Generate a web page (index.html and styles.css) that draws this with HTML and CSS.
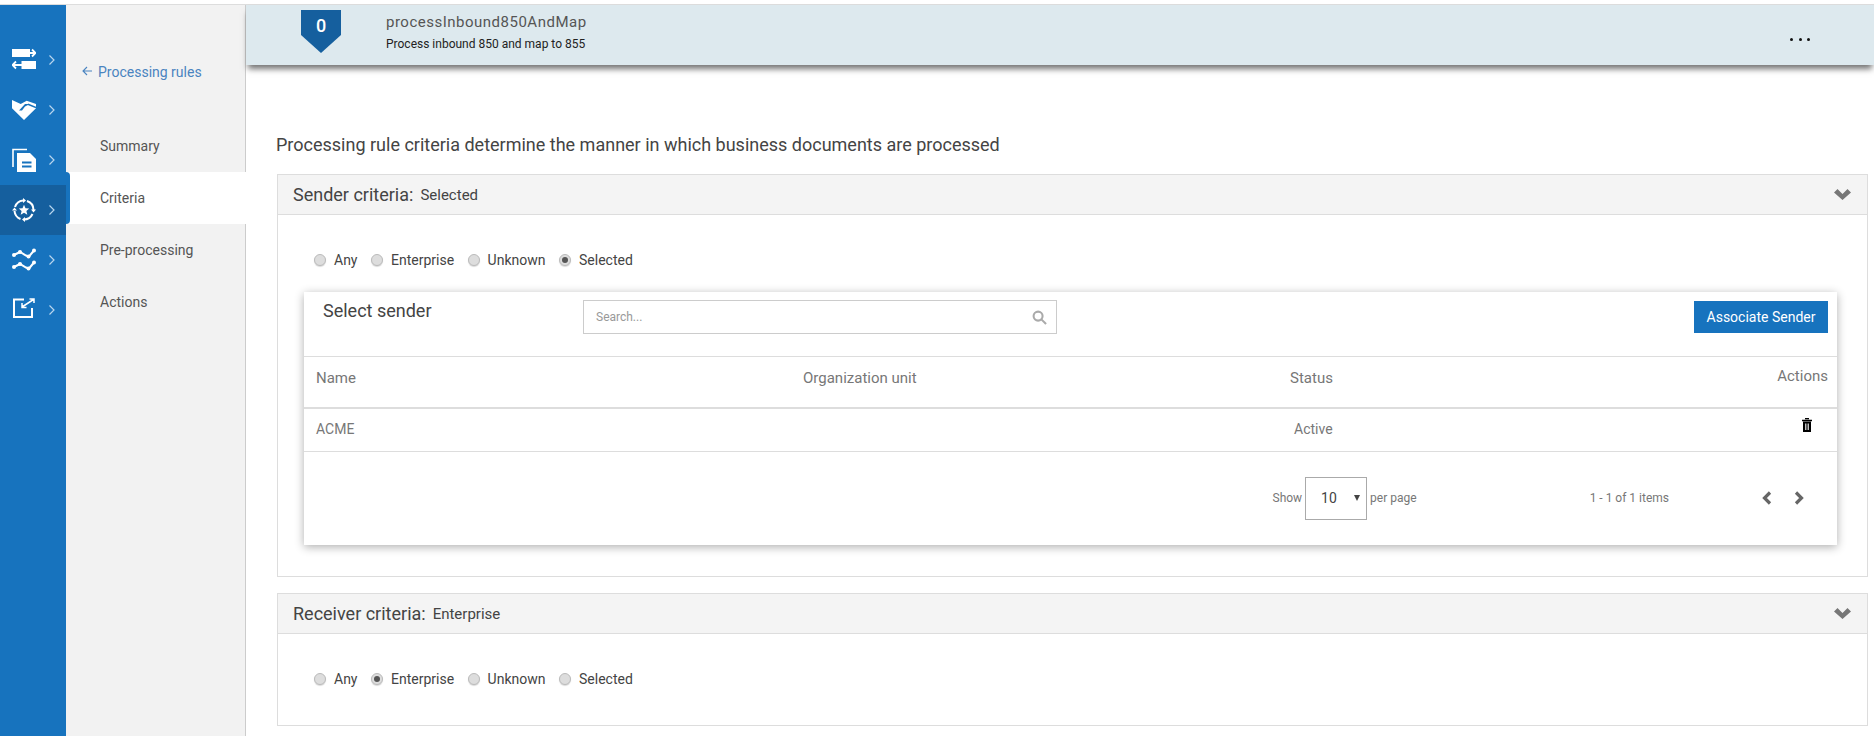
FILE: index.html
```html
<!DOCTYPE html>
<html lang="en">
<head>
  <meta charset="UTF-8">
  <title>Processing rule criteria</title>
  <link rel="stylesheet" href="styles.css">
</head>
<body>
  <div id="app">
    <!-- icon rail -->
    <nav id="rail">
      <a class="rail-item">
        <svg class="rail-icon" viewBox="0 0 24 24">
          <rect x="0" y="1" width="18" height="8" fill="#fff"/>
          <path d="M18 5h5M20 1.500l3.500 3.500-3.500 3.500" fill="none" stroke="#fff" stroke-width="1.800"/>
          <rect x="9.500" y="13" width="14.500" height="8" fill="#fff"/>
          <path d="M10 17H1M4 13.500.500 17 4 20.500" fill="none" stroke="#fff" stroke-width="1.800"/>
        </svg>
        <svg class="rail-arrow" viewBox="0 0 8 12"><path d="M1.500 1.500 6 6l-4.500 4.500" /></svg>
      </a>
      <a class="rail-item">
        <svg class="rail-icon" viewBox="0 0 24 24">
          <path d="M0 2l8.700 4 6-3.300L24 6v4.300L12 22 0 10.300z" fill="#fff"/>
          <path d="M7 12.500l6-6.500h5l-5 2.500-3 4z" fill="#1773be"/>
          <path d="M16 6.300L24 9.500" fill="none" stroke="#1773be" stroke-width="1.500"/>
        </svg>
        <svg class="rail-arrow" viewBox="0 0 8 12"><path d="M1.500 1.500 6 6l-4.500 4.500" /></svg>
      </a>
      <a class="rail-item">
        <svg class="rail-icon" viewBox="0 0 24 24">
          <path d="M1 19V1.500h14" fill="none" stroke="#fff" stroke-width="1.600"/>
          <path d="M5 5h13l6 6v13H5z" fill="#fff"/>
          <path d="M10 14.500h9.500M10 18.500h9.500" stroke="#1773be" stroke-width="2"/>
        </svg>
        <svg class="rail-arrow" viewBox="0 0 8 12"><path d="M1.500 1.500 6 6l-4.500 4.500" /></svg>
      </a>
      <a class="rail-item active">
        <svg class="rail-icon" viewBox="0 0 24 24">
          <path d="M3 9a9.500 9.500 0 0 1 8-6.500M15 3a9.500 9.500 0 0 1 6.500 9M20.500 16A9.500 9.500 0 0 1 12 21.500M8.500 21A9.500 9.500 0 0 1 2.500 13" fill="none" stroke="#fff" stroke-width="2"/>
          <path d="M11 0v5l3-2.500zM24 11.500h-5l2.500 3zM13 24v-5l-3 2.500zM0 12.500h5l-2.500-3z" fill="#fff"/>
          <path d="M12 6.800l1.500 3.500 3.700.3-2.800 2.400.9 3.700-3.300-2-3.300 2 .9-3.700-2.800-2.400 3.700-.3z" fill="#fff"/>
        </svg>
        <svg class="rail-arrow" viewBox="0 0 8 12"><path d="M1.500 1.500 6 6l-4.500 4.500" /></svg>
      </a>
      <a class="rail-item">
        <svg class="rail-icon" viewBox="0 0 24 24">
          <path d="M2 7l6-3 6 3.500 3 1 5-6M2 19l6-3 6 3.500 3 1 5-6" fill="none" stroke="#fff" stroke-width="2"/>
          <g fill="#fff">
            <circle cx="2" cy="7" r="2"/><circle cx="8" cy="4" r="2"/><circle cx="16.500" cy="8.500" r="2"/><circle cx="22" cy="2.500" r="2"/>
            <circle cx="2" cy="19" r="2"/><circle cx="8" cy="16" r="2"/><circle cx="16.500" cy="20.500" r="2"/><circle cx="22" cy="14.500" r="2"/>
          </g>
        </svg>
        <svg class="rail-arrow" viewBox="0 0 8 12"><path d="M1.500 1.500 6 6l-4.500 4.500" /></svg>
      </a>
      <a class="rail-item">
        <svg class="rail-icon" viewBox="0 0 24 24">
          <path d="M12 1.500H2V19h18V10" fill="none" stroke="#fff" stroke-width="2"/>
          <path d="M10 9 21.500 1.500M10 5v4.500h4.500M17.500 1H22v4" fill="none" stroke="#fff" stroke-width="1.500"/>
        </svg>
        <svg class="rail-arrow" viewBox="0 0 8 12"><path d="M1.500 1.500 6 6l-4.500 4.500" /></svg>
      </a>
    </nav>

    <!-- section nav -->
    <aside id="section-nav">
      <a class="back-link">
        <svg class="back-arrow" viewBox="0 0 10 10"><path d="M10 5H1M5 1 1 5l4 4"/></svg>
        Processing rules
      </a>
      <ul class="section-list">
        <li>Summary</li>
        <li class="active">Criteria</li>
        <li>Pre-processing</li>
        <li>Actions</li>
      </ul>
    </aside>

    <main id="main">
      <header class="rule-band">
        <div class="rule-badge">0</div>
        <div class="rule-info">
          <div class="rule-title">processInbound850AndMap</div>
          <div class="rule-sub">Process inbound 850 and map to 855</div>
        </div>
        <div class="rule-menu"><i></i><i></i><i></i></div>
      </header>

      <p class="intro">Processing rule criteria determine the manner in which business documents are processed</p>

      <section class="panel">
        <div class="panel-head">
          <span class="panel-title">Sender criteria:</span>
          <span class="panel-value">Selected</span>
          <svg class="panel-toggle" viewBox="0 0 17 11"><path d="M0 3.500 3.500 0l5 5 5-5L17 3.500 8.500 11z"/></svg>
        </div>
        <div class="panel-body">
          <div class="radios">
            <label class="radio"><span class="dot"></span>Any</label>
            <label class="radio"><span class="dot"></span>Enterprise</label>
            <label class="radio"><span class="dot"></span>Unknown</label>
            <label class="radio"><span class="dot on"></span>Selected</label>
          </div>

          <div class="card">
            <div class="card-head">
              <div class="card-title">Select sender</div>
              <div class="search">
                <span class="search-text">Search...</span>
                <svg class="search-icon" viewBox="0 0 16 16"><circle cx="6.500" cy="6.500" r="4.800"/><path d="M10 10l5 5"/></svg>
              </div>
              <button class="btn-primary" type="button">Associate Sender</button>
            </div>

            <table class="grid">
              <thead>
                <tr>
                  <th class="col-name">Name</th>
                  <th class="col-org">Organization unit</th>
                  <th class="col-status">Status</th>
                  <th class="col-actions">Actions</th>
                </tr>
              </thead>
              <tbody>
                <tr>
                  <td>ACME</td>
                  <td></td>
                  <td class="status-cell">Active</td>
                  <td class="trash-cell">
                    <svg class="trash" viewBox="0 0 10 14">
                      <path d="M3 .5h4M0 2.500h10" stroke="#000" stroke-width="1.400" fill="none"/>
                      <path d="M1 3.500h8V14H1z" fill="#000"/>
                      <path d="M3.800 5.500v6.500M6.200 5.500v6.500" stroke="#fff" stroke-width="1.100"/>
                    </svg>
                  </td>
                </tr>
              </tbody>
            </table>

            <div class="pager">
              <div class="page-size">
                <span>Show</span>
                <div class="page-select"><span>10</span><b class="caret"></b></div>
                <span>per page</span>
              </div>
              <div class="page-count">1 - 1 of 1 items</div>
              <div class="page-arrows">
                <svg viewBox="0 0 10 14"><path d="M8 1.500 2.500 7 8 12.500"/></svg>
                <svg viewBox="0 0 10 14"><path d="M2 1.500 7.500 7 2 12.500"/></svg>
              </div>
            </div>
          </div>
        </div>
      </section>

      <section class="panel">
        <div class="panel-head">
          <span class="panel-title">Receiver criteria:</span>
          <span class="panel-value">Enterprise</span>
          <svg class="panel-toggle" viewBox="0 0 17 11"><path d="M0 3.500 3.500 0l5 5 5-5L17 3.500 8.500 11z"/></svg>
        </div>
        <div class="panel-body short">
          <div class="radios">
            <label class="radio"><span class="dot"></span>Any</label>
            <label class="radio"><span class="dot on"></span>Enterprise</label>
            <label class="radio"><span class="dot"></span>Unknown</label>
            <label class="radio"><span class="dot"></span>Selected</label>
          </div>
        </div>
      </section>
    </main>
  </div>
</body>
</html>
```

FILE: styles.css
```css
html, body {
  margin: 0;
  height: 736px;
  overflow: hidden;
  background-color: #fff;
  font-family: Roboto, "Liberation Sans", sans-serif;
  color: #444;
}
body {
  padding-top: 4px;
  box-sizing: border-box;
}
#app {
  display: flex;
  height: 732px;
  box-sizing: border-box;
  border-top: 1px solid #ddd;
}

/* icon rail */
#rail {
  width: 66px;
  flex: none;
  padding-top: 30px;
  box-sizing: border-box;
  background-color: #1773be;
}
.rail-item {
  display: flex;
  align-items: center;
  height: 50px;
  padding-left: 12px;
  box-sizing: border-box;
}
.rail-item.active {
  background-color: #155f9e;
}
.rail-icon {
  width: 24px;
  height: 24px;
}
.rail-arrow {
  width: 8px;
  height: 12px;
  margin-left: 12px;
  fill: none;
  stroke: #b9d6ee;
  stroke-width: 1.2;
}

/* section nav */
#section-nav {
  width: 180px;
  flex: none;
  box-sizing: border-box;
  background-color: #f2f2f2;
  border-right: 1px solid #ccc;
}
.back-link {
  display: flex;
  align-items: center;
  gap: 6px;
  height: 20px;
  margin: 57px 0 0 16px;
  font-size: 14px;
  line-height: 20px;
  color: #4a84c0;
  white-space: nowrap;
}
.back-arrow {
  width: 10px;
  height: 10px;
  margin-top: -2px;
  fill: none;
  stroke: #4a84c0;
  stroke-width: 1.1;
}
.section-list {
  list-style: none;
  margin: 38px 0 0;
  padding: 0;
}
.section-list li {
  height: 52px;
  line-height: 52px;
  padding-left: 34px;
  font-size: 14px;
  color: #555;
}
.section-list li.active {
  position: relative;
  margin-right: -1px;
  background-color: #fff;
}
.section-list li.active::before {
  content: "";
  position: absolute;
  left: 0;
  top: 0;
  bottom: 0;
  width: 4px;
  background-color: #1773be;
  border-radius: 0 4px 4px 0;
}

/* main */
#main {
  flex: 1;
  min-width: 0;
}
.rule-band {
  display: flex;
  height: 60px;
  background-color: #dde9ee;
  box-shadow: 0 6px 6px -2px rgba(0, 0, 0, 0.55);
}
.rule-badge {
  width: 40px;
  height: 43px;
  margin: 5px 0 0 55px;
  padding-top: 6px;
  box-sizing: border-box;
  background-color: #155f9e;
  clip-path: polygon(0 0, 100% 0, 100% 58%, 50% 100%, 0 58%);
  color: #fff;
  font-size: 18px;
  font-weight: 500;
  line-height: 20px;
  text-align: center;
}
.rule-info {
  margin: 8px 0 0 45px;
}
.rule-title {
  font-size: 15px;
  line-height: 18px;
  letter-spacing: 0.5px;
  color: #555;
}
.rule-sub {
  margin-top: 5px;
  font-size: 12px;
  line-height: 16px;
  color: #222;
}
.rule-menu {
  display: flex;
  gap: 5.5px;
  margin: 33px 64px 0 auto;
}
.rule-menu i {
  width: 3px;
  height: 3px;
  border-radius: 50%;
  background-color: #111;
}
.intro {
  margin: 68px 0 17px 30px;
  font-size: 18px;
  line-height: 24px;
  color: #444;
}

/* panels */
.panel {
  margin: 0 6px 16px 31px;
  border: 1px solid #ddd;
}
.panel-head {
  display: flex;
  align-items: center;
  height: 39px;
  padding: 0 16px 0 15px;
  background-color: #f4f4f4;
  border-bottom: 1px solid #ddd;
}
.panel-title {
  font-size: 18px;
  color: #444;
}
.panel-value {
  margin-left: 7px;
  margin-top: 1px;
  font-size: 15px;
  color: #444;
}
.panel-toggle {
  width: 17px;
  height: 11px;
  margin-left: auto;
  fill: #777;
}
.panel-body {
  padding: 35px 30px 31px 26px;
}
.panel-body.short {
  padding-bottom: 36px;
}
.radios {
  display: flex;
  gap: 13.5px;
  height: 20px;
  margin-left: 10px;
}
.radio {
  display: flex;
  align-items: center;
  gap: 8px;
  font-size: 14px;
  line-height: 20px;
  color: #444;
}
.dot {
  display: flex;
  align-items: center;
  justify-content: center;
  width: 12px;
  height: 12px;
  box-sizing: border-box;
  border: 1px solid #bbb;
  border-radius: 50%;
  background-color: #ddd;
  box-shadow: 0 1px 1px rgba(0, 0, 0, 0.15);
}
.dot.on::after {
  content: "";
  width: 6px;
  height: 6px;
  border-radius: 50%;
  background-color: #555;
}

/* sender card */
.card {
  margin-top: 22px;
  background-color: #fff;
  box-shadow: 0 2px 9px rgba(0, 0, 0, 0.32);
}
.card-head {
  display: flex;
  align-items: flex-start;
  height: 65px;
  padding-right: 9px;
  box-sizing: border-box;
  border-bottom: 1px solid #ddd;
}
.card-title {
  width: 260px;
  padding: 9px 0 0 19px;
  font-size: 18px;
  line-height: 20px;
  color: #444;
}
.search {
  display: flex;
  align-items: center;
  justify-content: space-between;
  width: 474px;
  height: 34px;
  margin-top: 8px;
  padding: 0 9px 0 12px;
  box-sizing: border-box;
  border: 1px solid #ccc;
}
.search-text {
  font-size: 12px;
  color: #999;
}
.search-icon {
  width: 15px;
  height: 15px;
  fill: none;
  stroke: #aaa;
  stroke-width: 2.2;
}
.btn-primary {
  width: 134px;
  height: 32px;
  margin: 9px 0 0 auto;
  padding: 0;
  border: none;
  background-color: #1773be;
  color: #fff;
  font-family: inherit;
  font-size: 14px;
}
.grid {
  width: 100%;
  table-layout: fixed;
  border-collapse: collapse;
  font-size: 14px;
  color: #777;
}
.grid th {
  height: 51px;
  padding: 0 0 9px 12px;
  box-sizing: border-box;
  border-bottom: 2px solid #ddd;
  font-size: 15px;
  font-weight: 400;
  text-align: left;
}
.col-name, .col-org {
  width: 487px;
}
.col-status {
  width: 427px;
}
.grid th.col-actions {
  padding: 0 9px 13px 0;
  text-align: right;
}
.grid td {
  height: 43px;
  padding: 0 0 2px 12px;
  box-sizing: border-box;
  border-bottom: 1px solid #ddd;
}
.grid td.status-cell {
  padding-left: 16px;
}
.grid td.trash-cell {
  padding: 0 25px 11px 0;
  text-align: right;
}
.trash {
  width: 10px;
  height: 14px;
  vertical-align: middle;
}
.pager {
  display: flex;
  align-items: center;
  justify-content: flex-end;
  height: 93px;
  font-size: 12px;
  color: #777;
}
.page-size {
  display: flex;
  align-items: center;
  gap: 3px;
  margin-right: 173px;
}
.page-select {
  display: flex;
  align-items: center;
  justify-content: space-between;
  width: 62px;
  height: 43px;
  padding: 0 6px 0 15px;
  box-sizing: border-box;
  border: 1px solid #aaa;
  font-size: 14px;
  color: #444;
}
.caret {
  width: 0;
  height: 0;
  border-left: 3px solid transparent;
  border-right: 3px solid transparent;
  border-top: 6px solid #444;
}
.page-count {
  margin-right: 93px;
}
.page-arrows {
  display: flex;
  gap: 22px;
  margin-right: 33px;
}
.page-arrows svg {
  width: 10px;
  height: 14px;
  fill: none;
  stroke: #666;
  stroke-width: 3.2;
}
```
